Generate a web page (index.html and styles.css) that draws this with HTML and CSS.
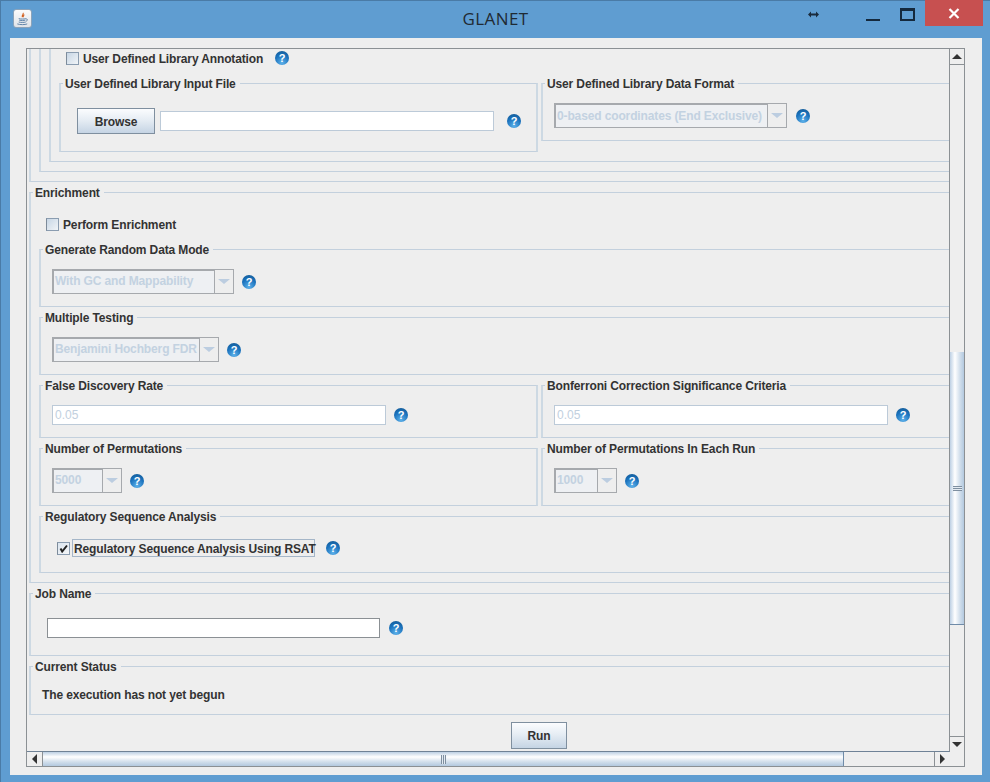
FILE: index.html
```html
<!DOCTYPE html>
<html lang="en">
<head>
<meta charset="utf-8">
<title>GLANET</title>
<link rel="stylesheet" href="styles.css">
</head>
<body>
<div class="window">
  <header class="titlebar">
    <span class="app-icon">
      <svg width="18" height="18" viewBox="0 0 18 18">
        <path d="M9.500 2.500c1.500 1.600-2 2.600-.6 4.600M11 4.500c-1.600 .8-1.600 1.700-.8 2.600" fill="none" stroke="#d2601f" stroke-width="1.100"/>
        <path d="M5 8.600c2 .6 5.500 .6 7.500 0M5.500 10.300c2 .5 4.700 .5 6.500 0M5 12.200c2 .6 5.500 .6 7.500 0M3.500 14.200c3 1 8 1 10.500 0M12.500 9c2-.5 2.500 1.700 .2 2.300" fill="none" stroke="#5a7fa6" stroke-width="1"/>
      </svg>
    </span>
    <h1 class="title">GLANET</h1>
    <span class="resize-cursor">
      <svg width="11" height="7" viewBox="0 0 11 7"><path d="M0 3.500 3 .5v2h5v-2l3 3-3 3v-2H3v2z" fill="#1a2b3c"/></svg>
    </span>
    <span class="win-btn win-min"></span>
    <span class="win-btn win-max"></span>
    <span class="win-close">
      <svg width="12" height="11" viewBox="0 0 12 11"><path d="M1.500 1 10.500 10M10.500 1 1.500 10" stroke="#fff" stroke-width="2.200" fill="none"/></svg>
    </span>
  </header>

  <main class="client">
    <div class="scrollpane">
      <div class="viewport">
        <div class="content">

          <div class="open">
            <div class="open">
              <div class="open">
                <div class="check-row lib-check">
                  <span class="check"></span><span class="label">User Defined Library Annotation</span><span class="help lib-help">?</span>
                </div>
                <div class="two-col lib-cols">
                  <section class="tb half">
                    <div class="tb-title">User Defined Library Input File</div>
                    <div class="row browse-row">
                      <button class="btn browse" type="button">Browse</button>
                      <span class="field field-browse"></span>
                      <span class="help help-wide">?</span>
                    </div>
                  </section>
                  <section class="tb side-top">
                    <div class="tb-title">User Defined Library Data Format</div>
                    <div class="row combo-row">
                      <span class="combo combo-format"><span class="combo-text">0-based coordinates (End Exclusive)</span><span class="combo-arrow"></span></span>
                      <span class="help help-9">?</span>
                    </div>
                  </section>
                </div>
              </div>
            </div>
          </div>

          <section class="tb outer enrichment">
            <div class="tb-title">Enrichment</div>
            <div class="check-row perform">
              <span class="check"></span><span class="label">Perform Enrichment</span>
            </div>
            <section class="tb">
              <div class="tb-title">Generate Random Data Mode</div>
              <div class="row combo-row">
                <span class="combo combo-gc"><span class="combo-text">With GC and Mappability</span><span class="combo-arrow"></span></span>
                <span class="help">?</span>
              </div>
            </section>
            <section class="tb next">
              <div class="tb-title">Multiple Testing</div>
              <div class="row combo-row">
                <span class="combo combo-fdr"><span class="combo-text">Benjamini Hochberg FDR</span><span class="combo-arrow"></span></span>
                <span class="help">?</span>
              </div>
            </section>
            <div class="two-col next">
              <section class="tb half">
                <div class="tb-title">False Discovery Rate</div>
                <div class="row combo-row">
                  <span class="field field-rate">0.05</span>
                  <span class="help">?</span>
                </div>
              </section>
              <section class="tb">
                <div class="tb-title">Bonferroni Correction Significance Criteria</div>
                <div class="row combo-row">
                  <span class="field field-rate">0.05</span>
                  <span class="help">?</span>
                </div>
              </section>
            </div>
            <div class="two-col next">
              <section class="tb half">
                <div class="tb-title">Number of Permutations</div>
                <div class="row combo-row">
                  <span class="combo combo-5000"><span class="combo-text">5000</span><span class="combo-arrow"></span></span>
                  <span class="help">?</span>
                </div>
              </section>
              <section class="tb">
                <div class="tb-title">Number of Permutations In Each Run</div>
                <div class="row combo-row">
                  <span class="combo combo-1000"><span class="combo-text">1000</span><span class="combo-arrow"></span></span>
                  <span class="help">?</span>
                </div>
              </section>
            </div>
            <section class="tb next">
              <div class="tb-title">Regulatory Sequence Analysis</div>
              <div class="check-row rsat">
                <span class="check checked">
                  <svg width="9" height="9" viewBox="0 0 9 9"><path d="M1.500 4.500 3.200 7.500 8 1.500" fill="none" stroke="#222" stroke-width="2"/></svg>
                </span>
                <span class="label focus">Regulatory Sequence Analysis Using RSAT</span>
                <span class="help rsat-help">?</span>
              </div>
            </section>
          </section>

          <section class="tb outer job">
            <div class="tb-title">Job Name</div>
            <div class="row job-row">
              <span class="field field-job"></span>
              <span class="help help-9">?</span>
            </div>
          </section>

          <section class="tb outer status">
            <div class="tb-title">Current Status</div>
            <p class="status-text">The execution has not yet begun</p>
          </section>

          <div class="run-row"><button class="btn run" type="button">Run</button></div>
        </div>
      </div>

      <div class="vbar">
        <span class="sb-btn"><span class="tri tri-up"></span></span>
        <div class="vtrack"><div class="vthumb"><span class="grip-v"></span></div></div>
        <span class="sb-btn sb-btn-down"><span class="tri tri-down"></span></span>
      </div>

      <div class="hbar">
        <span class="sb-btn-h"><span class="tri tri-left"></span></span>
        <div class="htrack"><div class="hthumb"><span class="grip-h"></span></div></div>
        <span class="sb-btn-h sb-btn-right"><span class="tri tri-right"></span></span>
      </div>
      <div class="corner"></div>
    </div>
  </main>
</div>
</body>
</html>
```

FILE: styles.css
```css
* { box-sizing: border-box; }
html, body { margin: 0; padding: 0; }
body {
  width: 990px;
  height: 782px;
  overflow: hidden;
  font-family: "Liberation Sans", Arial, sans-serif;
  font-size: 12px;
  letter-spacing: -.13px;
  font-weight: 700;
  color: #333;
}

/* window frame */
.window {
  width: 990px;
  height: 782px;
  display: flex;
  flex-direction: column;
  background: #5f9dd1;
  border-top: 1px solid #4a7ba6;
  border-left: 1px solid #4a7ba6;
}
.titlebar {
  height: 37px;
  flex: none;
  display: flex;
  align-items: flex-start;
  position: relative;
}
.app-icon {
  width: 19px;
  height: 19px;
  margin: 8px 0 0 12px;
  background: linear-gradient(#fbfbfb, #dfe3e8);
  border: 1px solid #8ba3ba;
  border-radius: 3px;
  display: flex;
}
.title {
  position: absolute;
  left: 0;
  right: 0;
  top: 8px;
  margin: 0;
  text-align: center;
  font: 400 17px/20px "Open Sans", sans-serif;
  letter-spacing: .4px;
  color: #1f2a33;
}
.resize-cursor { margin: 10px 0 0 776px; display: flex; position: relative; }
.win-btn { display: block; position: relative; }
.win-min { width: 14px; height: 2px; margin: 18px 0 0 47px; background: #14293d; }
.win-max { width: 15px; height: 13px; margin: 7px 0 0 20px; border: 2px solid #14293d; border-top-width: 3px; }
.win-close {
  width: 58px;
  height: 26px;
  margin: -1px 0 0 10px;
  background: #c75050;
  display: flex;
  align-items: center;
  justify-content: center;
  position: relative;
}

/* client */
.client {
  width: 972px;
  height: 737px;
  margin-left: 9px;
  background: #eeeeee;
  padding: 10px 0 0 16px;
}
.scrollpane {
  width: 939px;
  height: 719px;
  display: grid;
  grid-template-columns: 923px 14px;
  grid-template-rows: 703px 14px;
  background: #eeeeee;
  border: 1px solid #8b9094;
}
.viewport {
  overflow: hidden;
  border-right: 1px solid #8b9094;
  border-bottom: 1px solid #6f8296;
}
.content { width: 922px; padding-left: 2px; }

/* titled panels */
.tb {
  border-top: 1px solid #c3d0dd;
  border-bottom: 1px solid #c3d0dd;
  border-left: 2px solid #cdd9e3;
  padding-left: 11px;
}
.tb-title {
  display: table;
  margin: -7px 0 0 -9px;
  padding: 0 4px 0 2px;
  height: 14px;
  line-height: 14px;
  background: #eeeeee;
  color: #333;
}
.half { border-right: 2px solid #cdd9e3; }
.open {
  border-left: 2px solid #cdd9e3;
  border-bottom: 1px solid #c3d0dd;
  padding: 0 0 9px 8px;
}
.two-col { display: grid; grid-template-columns: 499px 1fr; column-gap: 3px; }
.next { margin-top: 10px; }
.outer { padding-left: 8px; margin-top: 10px; }
.enrichment { padding-bottom: 9px; }
.outer > .tb-title { margin-left: -6px; }

.row { display: flex; align-items: center; }
.check-row { display: flex; align-items: center; height: 20px; }

/* top section */
.lib-check { height: 18px; margin-left: 7px; }
.lib-cols { margin-top: 16px; grid-template-columns: 479px 1fr; }
.browse-row { margin: 17px 0 17px 5px; }
.browse { width: 78px; height: 26px; }
.field-browse { width: 334px; margin-left: 5px; }
.side-top { align-self: start; }
.side-top .combo-text { line-height: 25px; }

/* enrichment */
.perform { margin: 14px 0 15px 7px; }
.combo-row { margin: 12px 0; }
.rsat { margin: 14px 0 14px 5px; }

.job-row { margin: 17px 0 17px 8px; }
.status-text { margin: 14px 0 12px 3px; line-height: 14px; }

.run-row { display: flex; margin: 7px 0 0 482px; }
.run { width: 56px; height: 27px; }

/* controls */
.btn {
  border: 1px solid #7f8f9f;
  background: linear-gradient(#fbfcfe 0, #e6edf4 45%, #c5d4e4 100%);
  font: 700 12px "Liberation Sans", Arial, sans-serif;
  letter-spacing: -.13px;
  color: #333;
  padding: 1px 0 0;
}
.check {
  width: 13px;
  height: 13px;
  flex: none;
  border: 1px solid #8a9cb0;
  border-left-color: #7d8b9a;
  background: linear-gradient(135deg, #c7d6e5, #f1f4f7);
  display: flex;
  align-items: center;
  justify-content: center;
}
.checked { background: linear-gradient(135deg, #dbe5ef, #f4f6f8); }
.label { margin-left: 4px; padding-top: 2px; white-space: nowrap; }
.focus {
  margin-left: 2px;
  height: 18px;
  line-height: 16px;
  border: 1px solid #a5b6c8;
  padding: 1px 0 0 1px;
  width: 243px;
}
.help {
  flex: none;
  width: 14px;
  height: 14px;
  margin-left: 8px;
  border-radius: 50%;
  background: radial-gradient(circle at 50% 85%, #5db1ea 0, #1a72bd 55%, #14578f 100%);
  color: #fff;
  font: 700 11px/14px "Liberation Sans", Arial, sans-serif;
  letter-spacing: 0;
  text-align: center;
}
.help-9 { margin-left: 9px; }
.help-wide { margin-left: 13px; }
.lib-help { margin-left: 12px; }
.rsat-help { margin-left: 11px; }
.field {
  display: block;
  height: 20px;
  flex: none;
  background: #fff;
  border: 1px solid #bccad8;
  font: 400 12px/18px "Liberation Sans", Arial, sans-serif;
  letter-spacing: 0;
  color: #c2d0de;
  padding-left: 2px;
}
.field-rate { width: 334px; }
.field-job { width: 333px; border-color: #8b9094; }

.combo {
  display: flex;
  height: 25px;
  flex: none;
  border: 1px solid #a6a9ad;
}
.combo-text {
  flex: 1;
  border-right: 1px solid #a6a9ad;
  box-shadow: inset 1px 1px 0 #a6a9ad;
  background: #eef0f3;
  color: #c3d2e1;
  line-height: 23px;
  padding-left: 2px;
  white-space: nowrap;
  overflow: hidden;
}
.combo-arrow { width: 18px; display: flex; align-items: center; justify-content: center; }
.combo-arrow::before {
  content: "";
  border-left: 6px solid transparent;
  border-right: 6px solid transparent;
  border-top: 5px solid #bccde0;
}
.combo-format { width: 233px; }
.combo-gc { width: 182px; }
.combo-fdr { width: 167px; }
.combo-5000 { width: 70px; }
.combo-1000 { width: 63px; }

/* scrollbars */
.vbar {
  display: flex;
  flex-direction: column;
  background: #eeeeee;
}
.sb-btn {
  height: 16px;
  flex: none;
  border-bottom: 1px solid #8b9094;
  display: flex;
  align-items: center;
  justify-content: center;
  background: #eeeeee;
}
.sb-btn-down { border-bottom: 0; border-top: 1px solid #8b9094; }
.vtrack { flex: 1; }
.vthumb {
  margin-top: 287px;
  height: 273px;
  border-bottom: 1px solid #6f8ba8;
  background: linear-gradient(90deg, #bdd0e4 0, #ffffff 35%, #d2dfec 70%, #b3c9df 100%);
  display: flex;
  align-items: center;
  justify-content: center;
}
.grip-v { width: 9px; height: 5px; background: repeating-linear-gradient(#7e8fa0 0 1px, #e4ebf2 1px 2px); }
.hbar {
  display: flex;
  background: #eeeeee;
}
.sb-btn-h {
  width: 16px;
  flex: none;
  border-right: 1px solid #8b9094;
  display: flex;
  align-items: center;
  justify-content: center;
}
.sb-btn-right { border-right: 0; border-left: 1px solid #8b9094; }
.htrack { flex: 1; }
.hthumb {
  height: 100%;
  width: 801px;
  border-right: 1px solid #6f8ba8;
  background: linear-gradient(#bdd0e4 0, #ffffff 35%, #d2dfec 70%, #b3c9df 100%);
  display: flex;
  align-items: center;
  justify-content: center;
}
.grip-h { width: 5px; height: 9px; background: repeating-linear-gradient(90deg, #7e8fa0 0 1px, #e4ebf2 1px 2px); }
.corner { background: #eeeeee; }
.tri { display: block; width: 0; height: 0; }
.tri-up { border-left: 5px solid transparent; border-right: 5px solid transparent; border-bottom: 5px solid #333; }
.tri-down { border-left: 5px solid transparent; border-right: 5px solid transparent; border-top: 5px solid #333; }
.tri-left { border-top: 5px solid transparent; border-bottom: 5px solid transparent; border-right: 5px solid #333; }
.tri-right { border-top: 5px solid transparent; border-bottom: 5px solid transparent; border-left: 5px solid #333; }
```
